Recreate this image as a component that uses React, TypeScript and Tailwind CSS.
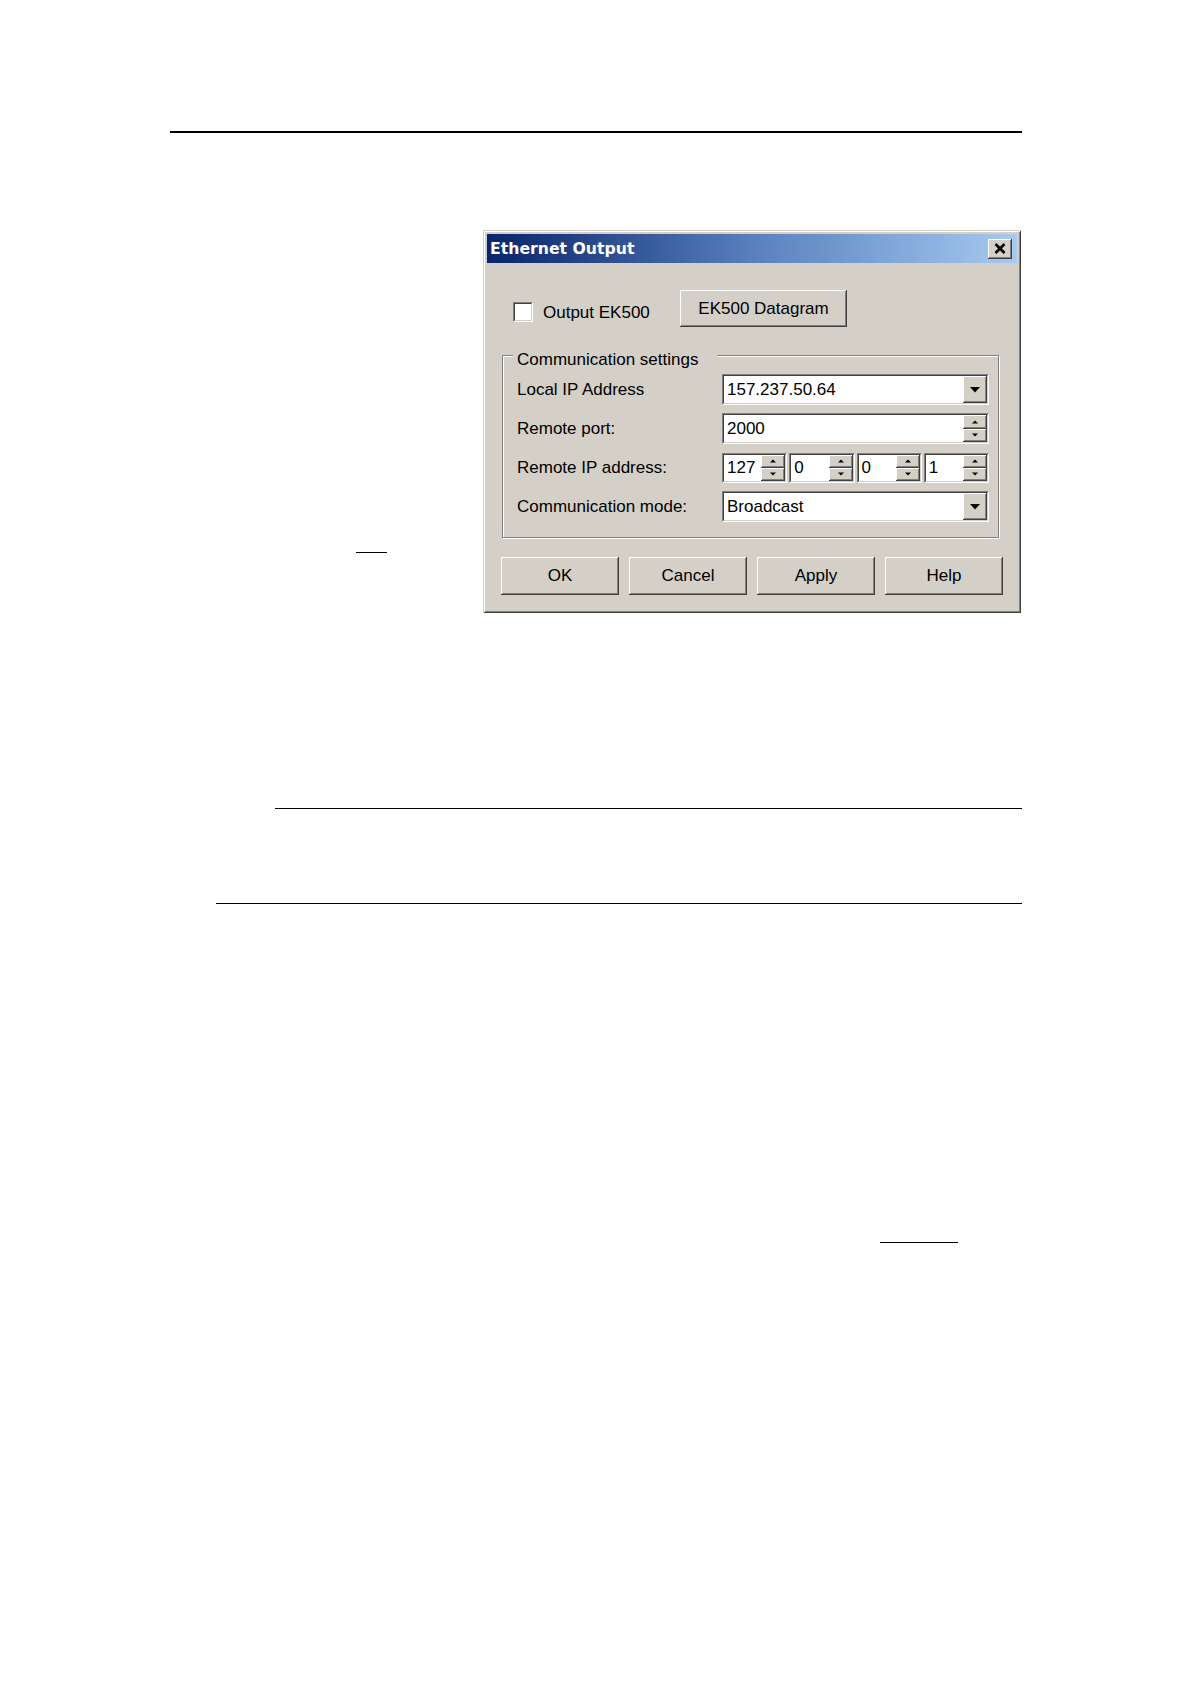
import React from "react";

const raised =
  "bg-[#d4d0c8] shadow-[inset_-1px_-1px_0_#404040,inset_1px_1px_0_#ffffff,inset_-2px_-2px_0_#808080,inset_2px_2px_0_#d4d0c8]";

function Sunken({ className, children }: { className: string; children?: React.ReactNode }) {
  return (
    <div className={`border border-t-[#808080] border-l-[#808080] border-r-white border-b-white ${className}`}>
      <div className="h-full w-full border border-t-[#404040] border-l-[#404040] border-r-[#d4d0c8] border-b-[#d4d0c8] bg-white flex items-stretch">
        {children}
      </div>
    </div>
  );
}

function DownArrow() {
  return (
    <svg width="10" height="6" viewBox="0 0 10 6">
      <polygon points="0,0 10,0 5,5.5" fill="#000" />
    </svg>
  );
}

function SmallTri({ up }: { up: boolean }) {
  return (
    <svg width="6" height="4" viewBox="0 0 6 4">
      {up ? <polygon points="0,3.5 6,3.5 3,0.5" fill="#000" /> : <polygon points="0,0.5 6,0.5 3,3.5" fill="#000" />}
    </svg>
  );
}

function Spin({ w }: { w: string }) {
  return (
    <div className={`flex flex-col ${w}`}>
      <div className={`flex-1 flex items-center justify-center ${raised}`}>
        <SmallTri up={true} />
      </div>
      <div className={`flex-1 flex items-center justify-center ${raised}`}>
        <SmallTri up={false} />
      </div>
    </div>
  );
}

function Combo({ value }: { value: string }) {
  return (
    <Sunken className="w-[267px] h-[31px]">
      <div className="flex-1 flex items-center pl-[3px] text-[17px] text-black">{value}</div>
      <div className={`w-[24px] flex items-center justify-center ${raised}`}>
        <DownArrow />
      </div>
    </Sunken>
  );
}

export default function App() {
  const font = { fontFamily: '"Liberation Sans", Arial, sans-serif' };
  return (
    <div className="w-[1191px] h-[1684px] bg-white flex flex-col" style={font}>
      {/* top rule */}
      <div className="mt-[131px] ml-[170px] w-[852px] h-[2px] bg-black" />

      {/* figure row */}
      <div className="flex mt-[97px]">
        <div className="w-[483px] pl-[356px] pt-[322px]">
          <div className="w-[31px] h-px bg-black" />
        </div>

        {/* dialog */}
        <div
          className="w-[538px] h-[383px] p-[4px] bg-[#d4d0c8] flex flex-col shadow-[inset_1px_1px_0_#d4d0c8,inset_-1px_-1px_0_#404040,inset_2px_2px_0_#ffffff,inset_-2px_-2px_0_#808080]"
        >
          {/* title bar */}
          <div className="h-[29px] bg-linear-to-r from-[#0a246a] via-[#5a7fbd] to-[#a6caf0] flex items-center justify-between pl-[3px] pr-[5px]">
            <span
              className="text-white font-bold text-[15.7px] leading-none"
              style={{ fontFamily: '"DejaVu Sans", Verdana, sans-serif' }}
            >
              Ethernet Output
            </span>
            <div className={`w-[24px] h-[20px] flex items-center justify-center ${raised}`}>
              <svg width="12" height="11" viewBox="0 0 12 11">
                <path d="M1.5 1 L10.5 10 M10.5 1 L1.5 10" stroke="#000" strokeWidth="2.6" />
              </svg>
            </div>
          </div>

          {/* first row */}
          <div className="flex mt-[27px] items-start">
            <div className="ml-[26px] w-[167px] mt-[12px] flex items-center h-[20px]">
              <Sunken className="w-[20px] h-[20px]" />
              <span className="ml-[10px] text-[17px] text-black leading-none">Output EK500</span>
            </div>
            <div className={`w-[167px] h-[37px] flex items-center justify-center text-[17px] text-black ${raised}`}>
              EK500 Datagram
            </div>
          </div>

          {/* group box */}
          <div className="relative mt-[28px] ml-[15px] w-[497px] h-[183px] border border-[#808080] shadow-[inset_1px_1px_0_#ffffff,1px_1px_0_#ffffff]">
            <div className="absolute left-[10px] top-[-7px] pl-[4px] pr-[19px] bg-[#d4d0c8] text-[17px] text-black leading-[22px]">
              Communication settings
            </div>
            <div className="flex flex-col gap-[8px] pt-[18px] pl-[14px]">
              <div className="flex items-center h-[31px]">
                <div className="w-[205px] text-[17px] text-black">Local IP Address</div>
                <Combo value="157.237.50.64" />
              </div>
              <div className="flex items-center h-[31px]">
                <div className="w-[205px] text-[17px] text-black">Remote port:</div>
                <Sunken className="w-[267px] h-[31px]">
                  <div className="flex-1 flex items-center pl-[3px] text-[17px] text-black">2000</div>
                  <Spin w="w-[24px]" />
                </Sunken>
              </div>
              <div className="flex items-center h-[31px]">
                <div className="w-[205px] text-[17px] text-black">Remote IP address:</div>
                <div className="w-[267px] grid grid-cols-4 gap-[2px]">
                  {["127", "0", "0", "1"].map((v, i) => (
                    <Sunken key={i} className="h-[30px]">
                      <div className="flex-1 flex items-center pl-[3px] text-[17px] text-black">{v}</div>
                      <Spin w="w-[24px]" />
                    </Sunken>
                  ))}
                </div>
              </div>
              <div className="flex items-center h-[31px]">
                <div className="w-[205px] text-[17px] text-black">Communication mode:</div>
                <Combo value="Broadcast" />
              </div>
            </div>
          </div>

          {/* buttons */}
          <div className="flex gap-[10px] mt-[19px] ml-[14px]">
            {["OK", "Cancel", "Apply", "Help"].map((b) => (
              <div
                key={b}
                className={`w-[118px] h-[38px] flex items-center justify-center text-[17px] text-black ${raised}`}
              >
                {b}
              </div>
            ))}
          </div>
        </div>
      </div>

      {/* rules below */}
      <div className="mt-[195px] ml-[275px] w-[747px] h-px bg-black" />
      <div className="mt-[94px] ml-[216px] w-[806px] h-px bg-black" />
      <div className="mt-[338px] ml-[880px] w-[78px] h-px bg-black" />
    </div>
  );
}
